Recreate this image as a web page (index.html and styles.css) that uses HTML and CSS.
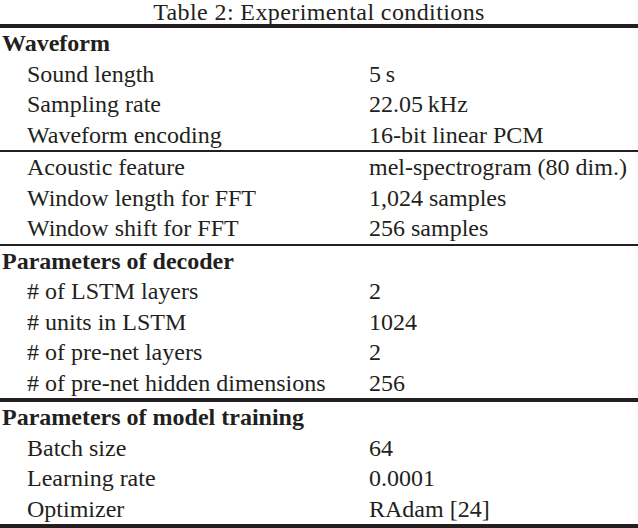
FILE: index.html
```html
<!DOCTYPE html>
<html>
<head>
<meta charset="utf-8">
<link rel="stylesheet" href="styles.css">
</head>
<body>
<div class="page">
  <div class="caption">Table 2: Experimental conditions</div>
  <div class="rule thick"></div>
  <div class="row head"><span class="k">Waveform</span></div>
  <div class="row"><span class="k">Sound length</span><span class="v">5&thinsp;s</span></div>
  <div class="row"><span class="k">Sampling rate</span><span class="v">22.05&thinsp;kHz</span></div>
  <div class="row"><span class="k">Waveform encoding</span><span class="v">16-bit linear PCM</span></div>
  <div class="rule thin"></div>
  <div class="row"><span class="k">Acoustic feature</span><span class="v">mel-spectrogram (80 dim.)</span></div>
  <div class="row"><span class="k">Window length for FFT</span><span class="v">1,024 samples</span></div>
  <div class="row"><span class="k">Window shift for FFT</span><span class="v">256 samples</span></div>
  <div class="rule thin"></div>
  <div class="row head"><span class="k">Parameters of decoder</span></div>
  <div class="row"><span class="k"># of LSTM layers</span><span class="v">2</span></div>
  <div class="row"><span class="k"># units in LSTM</span><span class="v">1024</span></div>
  <div class="row"><span class="k"># of pre-net layers</span><span class="v">2</span></div>
  <div class="row"><span class="k"># of pre-net hidden dimensions</span><span class="v">256</span></div>
  <div class="rule thick"></div>
  <div class="row head"><span class="k">Parameters of model training</span></div>
  <div class="row"><span class="k">Batch size</span><span class="v">64</span></div>
  <div class="row"><span class="k">Learning rate</span><span class="v">0.0001</span></div>
  <div class="row"><span class="k">Optimizer</span><span class="v">RAdam [24]</span></div>
  <div class="rule thick"></div>
</div>
</body>
</html>
```

FILE: styles.css
```css
html, body {
  margin: 0;
  padding: 0;
  background: #fff;
}
.page {
  width: 638px;
  font-family: "Liberation Serif", "Times New Roman", serif;
  font-size: 24px;
  color: #231f20;
}
.caption {
  height: 24px;
  line-height: 25px;
  font-size: 24px;
  letter-spacing: 0.4px;
  text-align: center;
}
.rule {
  background: #231f20;
}
.rule.thick { height: 4px; }
.rule.thin { height: 2px; }
.row {
  display: grid;
  grid-template-columns: 369px 1fr;
  height: 30.5px;
  line-height: 30.5px;
  white-space: nowrap;
}
.row .k {
  padding-left: 27px;
}
.row.head .k {
  padding-left: 2px;
  font-weight: bold;
}
```
